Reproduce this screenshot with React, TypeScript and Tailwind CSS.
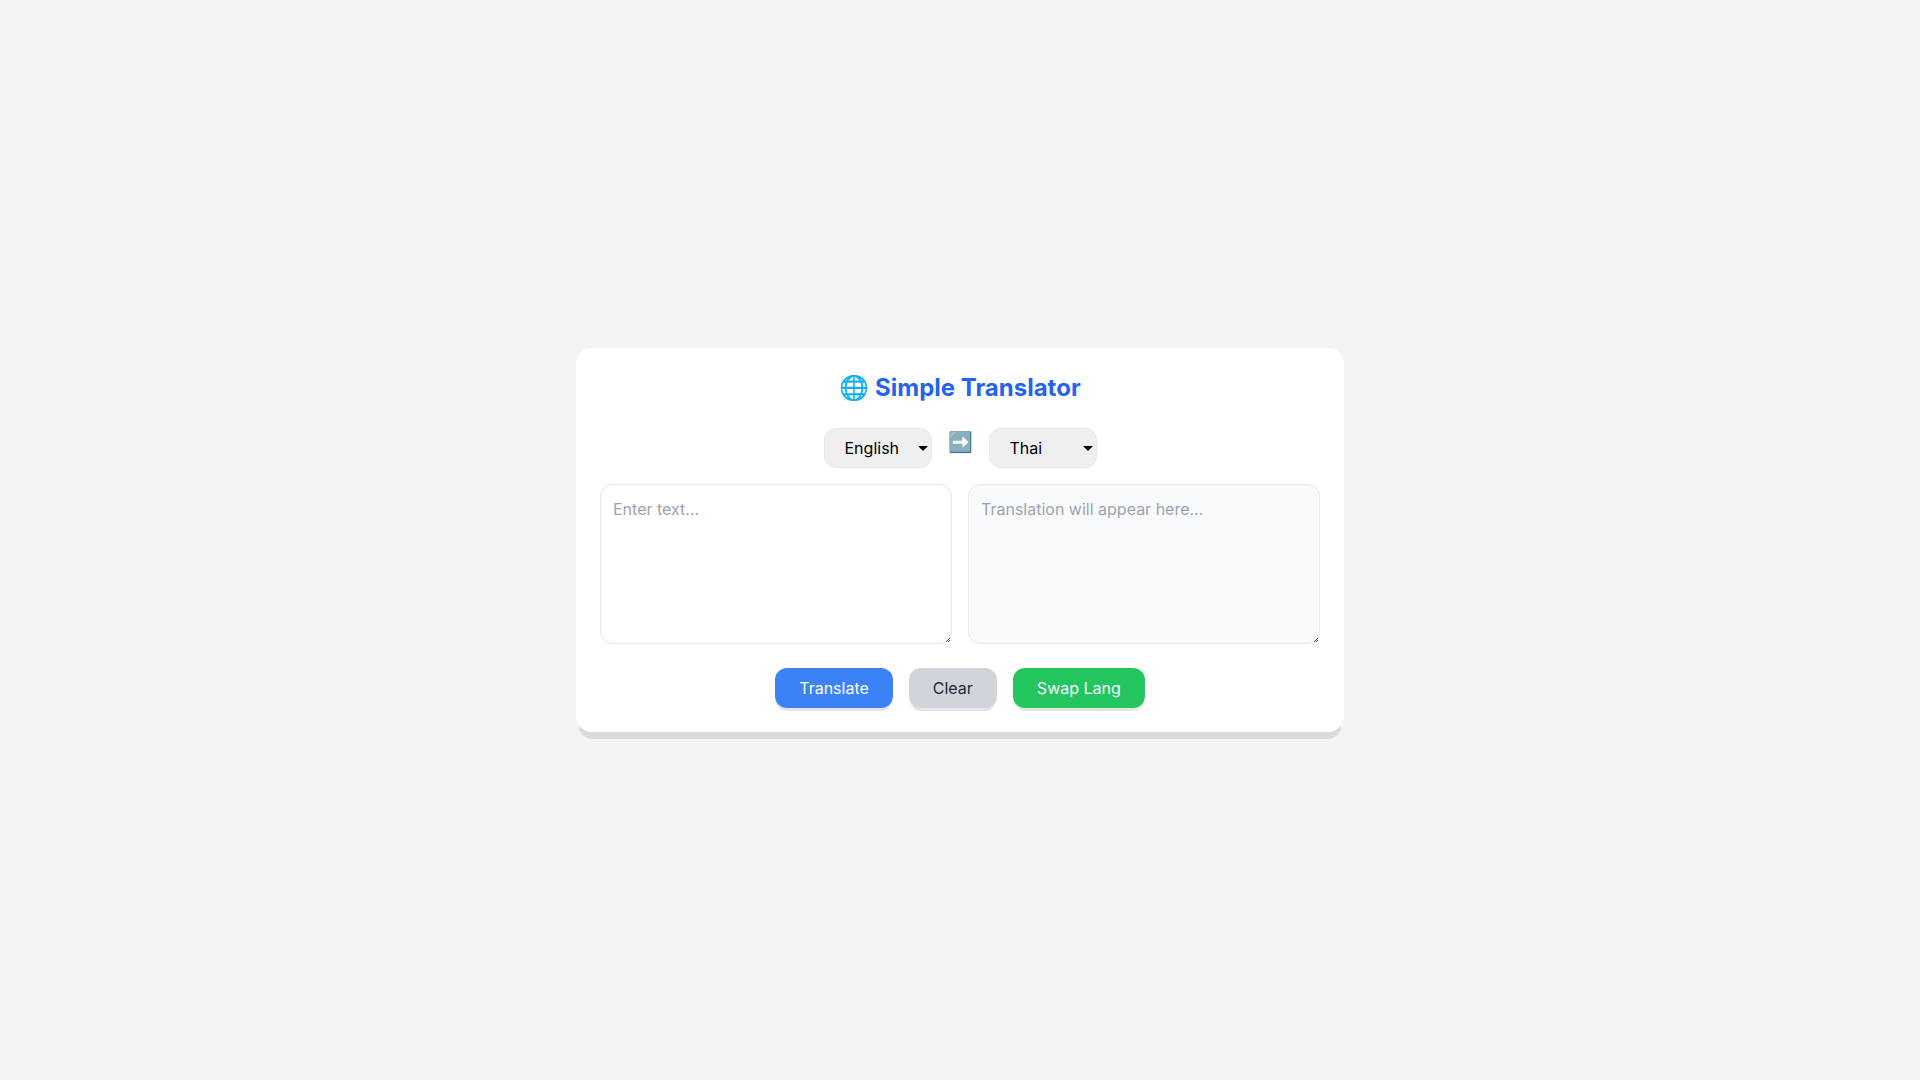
import { useState } from "react";

type TLanguage = {
  code: string;
  name: string;
};

interface ILanguageSelect {
  label: string;
  value: string;
  onChange: (code: string) => void;
}

interface ITextBox {
  label: string;
  placeholder: string;
  value: string;
  onChange?: (value: string) => void;
}

const languages: TLanguage[] = [
  { code: "en", name: "English" },
  { code: "th", name: "Thai" },
];

const LanguageSelect = (props: Readonly<ILanguageSelect>) => {
  const { label, value, onChange } = props;

  return (
    <div className="relative">
      <select
        aria-label={label}
        value={value}
        onChange={(e) => onChange(e.target.value)}
        className="w-27 h-10 pl-5 pr-4 appearance-none border border-[#e5e7eb] rounded-xl bg-[#efefef] text-black"
      >
        {languages.map((language) => (
          <option key={language.code} value={language.code}>
            {language.name}
          </option>
        ))}
      </select>
      <svg
        viewBox="0 0 10 5"
        className="absolute right-1 top-[18px] w-[10px] h-[5px] pointer-events-none"
        aria-hidden="true"
      >
        <path d="M0 0h10L5 5z" />
      </svg>
    </div>
  );
};

const TextBox = (props: Readonly<ITextBox>) => {
  const { label, placeholder, value, onChange } = props;

  return (
    <div className="relative">
      <textarea
        aria-label={label}
        placeholder={placeholder}
        value={value}
        readOnly={!onChange}
        onChange={(e) => onChange?.(e.target.value)}
        className="block w-full h-40 p-3 border border-[#e5e7eb] rounded-xl read-only:bg-[#f9fafb] placeholder:text-[#9ca3af] [&::-webkit-resizer]:bg-transparent"
      />
      {/* resize grip */}
      <svg
        viewBox="0 0 4 4"
        shapeRendering="crispEdges"
        className="absolute right-[2px] bottom-[2px] w-1 h-1 pointer-events-none"
        aria-hidden="true"
      >
        <path
          d="M3 0h1v1h-1zM2 1h1v1h-1zM1 2h1v1h-1zM3 2h1v1h-1zM0 3h1v1h-1zM2 3h1v1h-1z"
          fill="#4b4b4b"
        />
      </svg>
    </div>
  );
};

const App = () => {
  const [from, setFrom] = useState("en");
  const [to, setTo] = useState("th");
  const [text, setText] = useState("");
  const [result, setResult] = useState("");

  const _onTranslate = () => setResult(text.trim());

  const _onClear = () => {
    setText("");
    setResult("");
  };

  const _onSwap = () => {
    setFrom(to);
    setTo(from);
    setText(result);
    setResult(text);
  };

  return (
    <div className="min-h-screen flex items-center justify-center bg-[#f3f4f6] font-['Inter','Noto_Sans',sans-serif]">
      <main className="w-full max-w-3xl p-6 bg-white rounded-2xl shadow-[0_10px_0_-3px_rgba(0,0,0,0.1)]">
        <h1 className="mb-6 text-2xl font-bold text-center text-[#2563eb]">
          🌐 Simple Translator
        </h1>
        <div className="flex justify-center gap-4 mb-4">
          <LanguageSelect label="From" value={from} onChange={setFrom} />
          <span className="text-xl">➡️</span>
          <LanguageSelect label="To" value={to} onChange={setTo} />
        </div>
        <div className="grid md:grid-cols-2 gap-4">
          <TextBox
            label="Text"
            placeholder="Enter text..."
            value={text}
            onChange={setText}
          />
          <TextBox
            label="Translation"
            placeholder="Translation will appear here..."
            value={result}
          />
        </div>
        <div className="flex justify-center gap-4 mt-6">
          <button
            type="button"
            className="px-6 py-2 rounded-xl bg-[#3b82f6] hover:bg-[#2563eb] text-white shadow-[0_4px_0_-1px_rgba(0,0,0,0.1)]"
            onClick={_onTranslate}
          >
            Translate
          </button>
          <button
            type="button"
            className="px-6 py-2 rounded-xl bg-[#d1d5db] hover:bg-[#9ca3af] text-[#1f2937] shadow-[0_4px_0_-1px_rgba(0,0,0,0.1)]"
            onClick={_onClear}
          >
            Clear
          </button>
          <button
            type="button"
            className="px-6 py-2 rounded-xl bg-[#22c55e] hover:bg-[#16a34a] text-white shadow-[0_4px_0_-1px_rgba(0,0,0,0.1)]"
            onClick={_onSwap}
          >
            Swap Lang
          </button>
        </div>
      </main>
    </div>
  );
};

export default App;
